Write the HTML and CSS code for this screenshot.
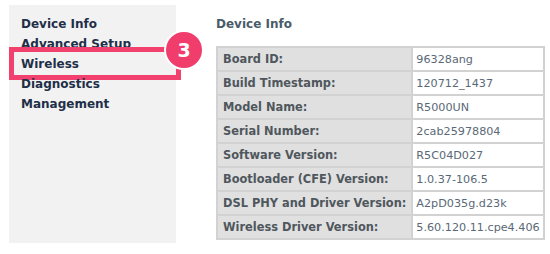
FILE: index.html
```html
<!DOCTYPE html>
<html lang="en">
<head>
    <meta charset="UTF-8">
    <title>Device Info</title>
    <link rel="stylesheet" href="styles.css">
</head>
<body>
    <div class="page">
        <nav class="sidebar">
            <a href="#">Device Info</a>
            <a href="#">Advanced Setup</a>
            <a href="#" class="marked">Wireless
                <span class="mark-box"></span>
                <span class="step">3</span>
            </a>
            <a href="#">Diagnostics</a>
            <a href="#">Management</a>
        </nav>

        <main class="content">
            <h2>Device Info</h2>
            <table class="info-table">
                <tr><th>Board ID:</th><td>96328ang</td></tr>
                <tr><th>Build Timestamp:</th><td>120712_1437</td></tr>
                <tr><th>Model Name:</th><td>R5000UN</td></tr>
                <tr><th>Serial Number:</th><td>2cab25978804</td></tr>
                <tr><th>Software Version:</th><td>R5C04D027</td></tr>
                <tr><th>Bootloader (CFE) Version:</th><td>1.0.37-106.5</td></tr>
                <tr><th>DSL PHY and Driver Version:</th><td>A2pD035g.d23k</td></tr>
                <tr><th>Wireless Driver Version:</th><td>5.60.120.11.cpe4.406</td></tr>
            </table>
        </main>
    </div>
</body>
</html>
```

FILE: styles.css
```css
* {
    margin: 0;
    padding: 0;
    box-sizing: border-box;
}

body {
    font-family: "DejaVu Sans", Verdana, sans-serif;
    background-color: #ffffff;
}

.page {
    display: flex;
    padding: 5px 0 0 9px;
}

/* Sidebar */
.sidebar {
    flex-shrink: 0;
    width: 167px;
    height: 238px;
    background-color: #f2f2f2;
    display: flex;
    flex-direction: column;
    padding: 9px 0 0 12px;
}

.sidebar a {
    position: relative;
    display: block;
    height: 20px;
    line-height: 20px;
    font-size: 12px;
    font-weight: bold;
    color: #1f2f48;
    text-decoration: none;
}

.mark-box {
    position: absolute;
    left: -12px;
    top: -7px;
    width: 172px;
    height: 33px;
    border: 5px solid #f2416f;
}

.step {
    position: absolute;
    left: 143px;
    top: -24px;
    width: 40px;
    height: 40px;
    border-radius: 50%;
    background-color: #f03d6b;
    border: 2px solid #ffffff;
    color: #ffffff;
    font-size: 19px;
    font-weight: bold;
    line-height: 36px;
    text-align: center;
}

/* Content */
.content {
    padding-left: 40px;
    padding-top: 12px;
}

.content h2 {
    font-size: 12px;
    font-weight: bold;
    color: #4a5c6a;
    height: 29px;
}

.info-table {
    width: 326px;
    border-collapse: collapse;
    border: 2px solid #bdbdbd;
}

.info-table th,
.info-table td {
    height: 24px;
    border: 2px solid #d2d2d2;
    padding: 0 5px;
    text-align: left;
    white-space: nowrap;
}

.info-table th {
    width: 193px;
    background-color: #e0e0e0;
    color: #4f575d;
    font-size: 11.4px;
}

.info-table td {
    background-color: #ffffff;
    color: #5a6977;
    font-size: 11.2px;
    padding: 0 3px;
}
```
